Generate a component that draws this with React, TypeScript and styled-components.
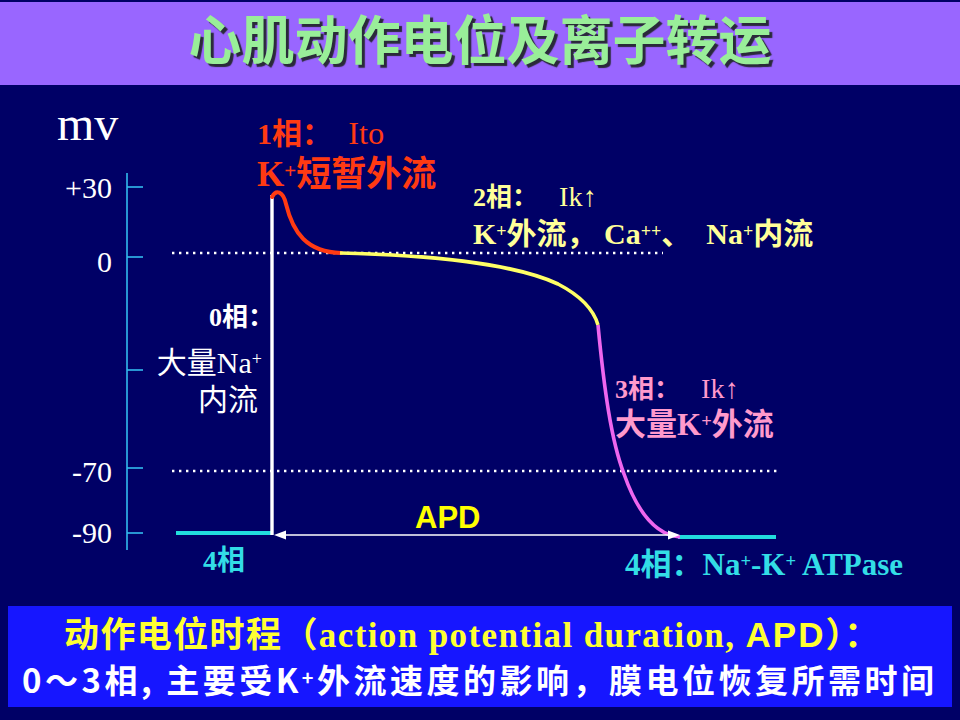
import React from 'react';
import styled, { createGlobalStyle } from 'styled-components';

const GlobalStyle = createGlobalStyle`
  html, body {
    margin: 0;
    padding: 0;
    background: #000066;
  }
`;

const SERIF = `"Liberation Serif", "Noto Sans CJK SC", serif`;
const CJK = `"Noto Sans CJK SC", "Liberation Sans", sans-serif`;

const Slide = styled.div`
  width: 960px;
  height: 720px;
  box-sizing: border-box;
  padding-top: 2px;
  background: #000066;
  display: flex;
  flex-direction: column;
  overflow: hidden;
`;

const TitleBar = styled.header`
  height: 83px;
  flex: none;
  background: #9966ff;
  display: flex;
  justify-content: center;
  align-items: flex-start;
  padding-top: 2px;
  box-sizing: border-box;
`;

const Title = styled.h1`
  margin: 0;
  font-family: ${CJK};
  font-weight: 700;
  font-size: 53px;
  line-height: 66px;
  color: #99ee99;
  text-shadow: 3px 3px 1px #2a2a3a;
`;

const Chart = styled.section`
  position: relative;
  flex: 1;
`;

const Plot = styled.svg`
  display: block;
  width: 960px;
  height: 521px;
`;

type Tone = 'white' | 'red' | 'yellow' | 'pink' | 'cyan' | 'apd';

const toneColor: Record<Tone, string> = {
  white: '#ffffff',
  red: '#ff3a12',
  yellow: '#ffff99',
  pink: '#ff99cc',
  cyan: '#33dde6',
  apd: '#ffff00',
};

/* a block of text pinned to its place on the chart canvas */
const Callout = styled.div<{ $x?: number; $right?: number; $y: number; $tone: Tone }>`
  position: absolute;
  top: ${({ $y }) => $y}px;
  ${({ $x }) => ($x !== undefined ? `left: ${$x}px;` : '')}
  ${({ $right }) => ($right !== undefined ? `right: ${$right}px;` : '')}
  display: flex;
  flex-direction: column;
  align-items: ${({ $right }) => ($right !== undefined ? 'flex-end' : 'flex-start')};
  color: ${({ $tone }) => toneColor[$tone]};
  font-family: ${SERIF};
  white-space: nowrap;
`;

const Line = styled.div<{ $size: number; $bold?: boolean; $lead?: number; $shift?: number; $sans?: boolean }>`
  font-size: ${({ $size }) => $size}px;
  font-weight: ${({ $bold }) => ($bold ? 700 : 400)};
  line-height: 1;
  margin-top: ${({ $lead }) => $lead ?? 0}px;
  margin-right: ${({ $shift }) => $shift ?? 0}px;
  ${({ $sans }) => ($sans ? `font-family: "Liberation Sans", Arial, sans-serif;` : '')}
`;

const Light = styled.span`
  font-weight: 400;
  font-size: 1.08em;
`;

const Sup = styled.span`
  position: relative;
  top: -0.42em;
  font-size: 0.6em;
`;

const AxisValue = styled.div<{ $y: number }>`
  position: absolute;
  top: ${({ $y }) => $y}px;
  right: 848px;
  font-family: ${SERIF};
  font-size: 30px;
  line-height: 1;
  color: #ffffff;
`;

const Unit = styled.div`
  position: absolute;
  top: 15px;
  left: 57px;
  font-family: ${SERIF};
  font-size: 48px;
  line-height: 1;
  color: #ffffff;
`;

const Summary = styled.div`
  flex: none;
  height: 101px;
  margin: 0 8px 13px;
  box-sizing: border-box;
  padding-top: 10px;
  background: #1616ff;
  display: flex;
  flex-direction: column;
  gap: 4px;
`;

const SummaryLine = styled.div<{ $indent: number; $main?: boolean }>`
  height: ${({ $main }) => ($main ? 38 : 42)}px;
  line-height: ${({ $main }) => ($main ? 38 : 42)}px;
  padding-left: ${({ $indent }) => $indent}px;
  white-space: nowrap;
  font-weight: 700;
  font-family: ${({ $main }) => ($main ? SERIF : CJK)};
  font-size: ${({ $main }) => ($main ? 35 : 33)}px;
  letter-spacing: ${({ $main }) => ($main ? 1.4 : 3.5)}px;
  color: ${({ $main }) => ($main ? '#ffff33' : '#ffffff')};
`;

const Sans = styled.span`
  font-family: "Liberation Sans", Arial, sans-serif;
  letter-spacing: 2px;
`;

const ticks = [187, 257, 370, 468, 533];
const axisValues = [
  { label: '+30', y: 88 },
  { label: '0', y: 162 },
  { label: '-70', y: 372 },
  { label: '-90', y: 433 },
];

const ActionPotentialPlot: React.FC = () => (
  <Plot viewBox="0 85 960 521">
    {/* y axis */}
    <line x1={127} y1={173} x2={127} y2={550} stroke="#33bbee" strokeWidth={1.6} />
    {ticks.map((y) => (
      <line key={y} x1={127} y1={y} x2={143} y2={y} stroke="#33bbee" strokeWidth={1.6} />
    ))}

    {/* threshold guides */}
    <line x1={172} y1={253} x2={663} y2={253} stroke="#ffffff" strokeWidth={2.4} strokeDasharray="2.4 4.6" />
    <line x1={172} y1={471} x2={777} y2={471} stroke="#ffffff" strokeWidth={2.4} strokeDasharray="2.4 4.6" />

    {/* phase 4 (rest) */}
    <line x1={176} y1={533} x2={273} y2={533} stroke="#22dddd" strokeWidth={4} />
    <line x1={678} y1={537} x2={776} y2={537} stroke="#22dddd" strokeWidth={4} />

    {/* phase 0 */}
    <line x1={272} y1={195} x2={272} y2={535} stroke="#ffffff" strokeWidth={3.4} />

    {/* phase 1 */}
    <path
      d="M 272 197 C 276 189, 283 191, 286 204 C 293 233, 307 252, 341 253"
      fill="none"
      stroke="#ff3a12"
      strokeWidth={4}
      strokeLinecap="round"
    />
    {/* phase 2 */}
    <path
      d="M 340 253 C 430 255, 515 264, 558 284 C 583 297, 594 311, 598 325"
      fill="none"
      stroke="#ffff66"
      strokeWidth={3.6}
    />
    {/* phase 3 */}
    <path
      d="M 598 325 C 604 388, 611 440, 624 474 C 638 514, 656 535, 680 537"
      fill="none"
      stroke="#ee66ee"
      strokeWidth={3.6}
    />

    {/* APD arrow */}
    <line x1={284} y1={535} x2={670} y2={535} stroke="#ffffff" strokeWidth={1.6} />
    <polygon points="274,535 286,530.5 286,539.5" fill="#ffffff" />
    <polygon points="680,535 668,530.5 668,539.5" fill="#ffffff" />
  </Plot>
);

export default function App() {
  return (
    <>
      <GlobalStyle />
      <Slide>
        <TitleBar>
          <Title>心肌动作电位及离子转运</Title>
        </TitleBar>

        <Chart>
          <ActionPotentialPlot />

          <Unit>mv</Unit>
          {axisValues.map((v) => (
            <AxisValue key={v.label} $y={v.y}>{v.label}</AxisValue>
          ))}

          <Callout $x={257} $y={32} $tone="red">
            <Line $size={30} $bold>
              1相：<Light>&nbsp;&nbsp;Ito</Light>
            </Line>
            <Line $size={35} $bold $lead={8}>
              K<Sup>+</Sup>短暂外流
            </Line>
          </Callout>

          <Callout $x={473} $y={98} $tone="yellow">
            <Line $size={26} $bold>
              2相：<Light>&nbsp;&nbsp;&nbsp;Ik↑</Light>
            </Line>
            <Line $size={30} $bold $lead={8}>
              K<Sup>+</Sup>外流，&nbsp;Ca<Sup>++</Sup>、&nbsp;&nbsp;Na<Sup>+</Sup>内流
            </Line>
          </Callout>

          <Callout $right={698} $y={220} $tone="white">
            <Line $size={26} $bold $shift={-12}>0相：</Line>
            <Line $size={30} $lead={17}>
              大量Na<Sup>+</Sup>
            </Line>
            <Line $size={30} $lead={7} $shift={4}>内流</Line>
          </Callout>

          <Callout $x={615} $y={290} $tone="pink">
            <Line $size={26} $bold>
              3相：<Light>&nbsp;&nbsp;&nbsp;Ik↑</Light>
            </Line>
            <Line $size={31} $bold $lead={6}>
              大量K<Sup>+</Sup>外流
            </Line>
          </Callout>

          <Callout $x={415} $y={417} $tone="apd">
            <Line $size={31} $bold $sans>APD</Line>
          </Callout>

          <Callout $x={203} $y={462} $tone="cyan">
            <Line $size={28} $bold>4相</Line>
          </Callout>

          <Callout $x={625} $y={464} $tone="cyan">
            <Line $size={31} $bold>
              4相：Na<Sup>+</Sup>-K<Sup>+</Sup> ATPase
            </Line>
          </Callout>
        </Chart>

        <Summary>
          <SummaryLine $indent={56} $main>
            动作电位时程（action potential duration, <Sans>APD</Sans>）：
          </SummaryLine>
          <SummaryLine $indent={14}>
            0～3相, 主要受K<Sup>+</Sup>外流速度的影响，膜电位恢复所需时间
          </SummaryLine>
        </Summary>
      </Slide>
    </>
  );
}
